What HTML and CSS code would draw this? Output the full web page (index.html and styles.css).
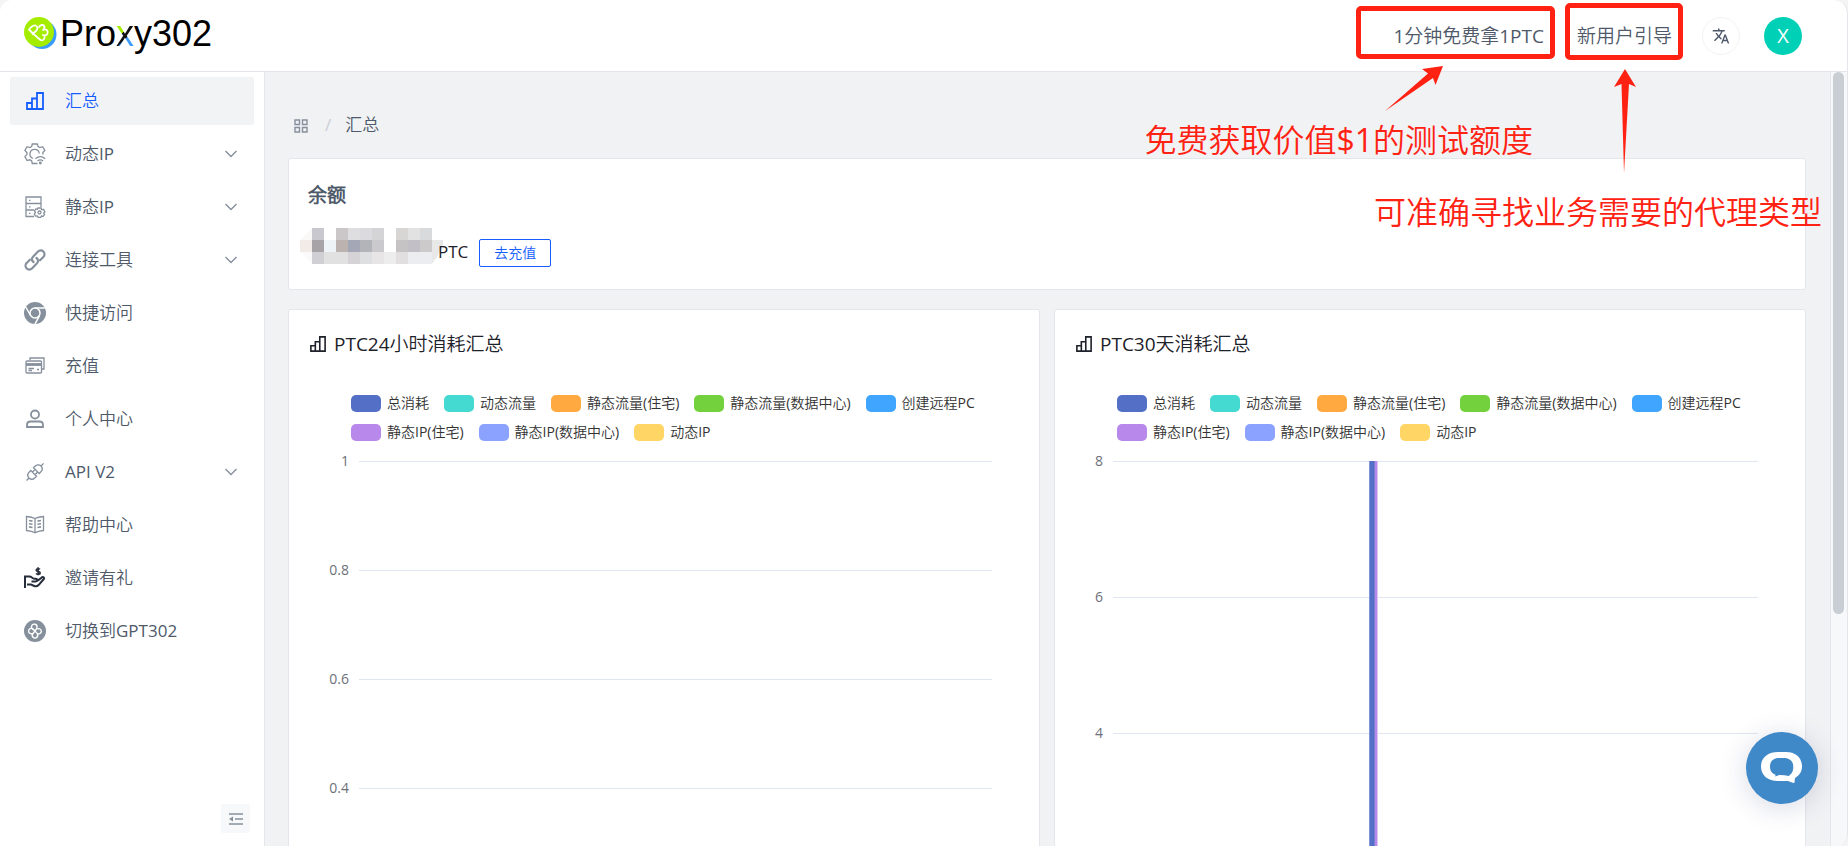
FILE: index.html
```html
<!DOCTYPE html>
<html lang="zh-CN">
<head>
<meta charset="utf-8">
<meta name="viewport" content="width=device-width, initial-scale=1">
<title>Proxy302</title>
<link rel="stylesheet" href="styles.css">
</head>
<body>
<svg class="sprite" aria-hidden="true">
  <symbol id="bars" viewBox="0 0 18 18"><path d="M1 11h5v6H1zM6 6.500h5V17H6zM11 1h6v16h-6z"/></symbol>
  <symbol id="chevron" viewBox="0 0 14 14"><path d="M1.500 4l5.500 5.500L12.500 4"/></symbol>
</svg>
<div class="app">
  <header class="topbar">
    <a class="brand" href="#">
      <svg class="brand-mark" viewBox="0 0 34 34" aria-hidden="true">
        <circle cx="18" cy="17.500" r="14.500" fill="#3b9cff"/>
        <circle cx="15" cy="15" r="15" fill="#a4ec00"/>
        <path d="M9.500 17L5 12.500C7.500 9.500 9.500 8 11.500 8.500c2.500 1 2.300 4 .5 5.500l-3.500 3M9.500 17l7 6c2 1 4-.5 4-2.500M15 10c1.500-3 5.500-2.500 5.500.5 0 1-.7 1.800-1.500 2.500 3-1.500 5.500.5 4.500 3.500-.7 2-3 2.500-4.500 1.500" fill="none" stroke="#fff" stroke-width="1.800" stroke-linecap="round" stroke-linejoin="round"/>
      </svg>
      <span class="brand-name">Pro<span class="brand-x">x</span>y302</span>
    </a>
    <nav class="top-actions">
      <a class="top-link" href="#">1分钟免费拿1PTC</a>
      <a class="top-link guide" href="#">新用户引导</a>
      <button class="lang" type="button" aria-label="切换语言">
        <svg viewBox="0 0 24 24" width="18" height="18"><path fill="#4e5969" d="M12.870 15.070l-2.540-2.510.03-.03c1.740-1.940 2.980-4.170 3.710-6.530H17V4h-7V2H8v2H1v1.990h11.170C11.500 7.920 10.440 9.750 9 11.350 8.070 10.320 7.300 9.190 6.690 8h-2c.73 1.630 1.730 3.170 2.980 4.560l-5.090 5.020L4 19l5-5 3.110 3.110.76-2.040zM18.500 10h-2L12 22h2l1.120-3h4.750L21 22h2l-4.500-12zm-2.620 7l1.620-4.330L19.120 17h-3.240z"/></svg>
      </button>
      <button class="avatar" type="button">X</button>
    </nav>
  </header>

  <div class="body">
    <aside class="sidebar">
      <nav class="menu">
        <a class="item active" href="#"><svg class="icon" viewBox="-2 -2 22 22"><use href="#bars" width="18" height="18"/></svg><span>汇总</span></a>
        <a class="item" href="#"><svg class="icon" viewBox="0 0 22 22"><path d="M13.500 20.500H8.300l-.7-2.700-1.800-1-2.700.8-2.200-4 2-2V9.500l-2-2 2.200-3.800 2.700.8 1.800-1L8.300 1h5l.8 2.500 1.800 1 2.700-.8 2.300 3.800-2 2v2"/><path d="M9 15.500a4.700 4.700 0 1 1 6.300-5"/><path d="M11.500 15.800c3-2.700 6.700-2.700 9.700 0M13.500 18c1.800-1.500 3.800-1.500 5.600 0"/><circle cx="16.300" cy="20" r=".8"/></svg><span>动态IP</span><svg class="arrow"><use href="#chevron"/></svg></a>
        <a class="item" href="#"><svg class="icon" viewBox="0 0 22 22"><path d="M10 20.500H2V1h15v10M2 7.500h15M2 14h8M5 4.300h1.500M5 10.800h1.500M5 17.300h1.500"/><circle cx="15.500" cy="16.500" r="1.500"/><path d="M14 12h3l.6 1.600 2-.2 1.300 2.400-1.200 1.200.8 1.500-1.300 1.800-1.700-.3-.8 1.300h-2.600l-.8-1.400-1.800.2-1.200-2.100 1.200-1.500-1-1.600 1.300-2 1.600.3z"/></svg><span>静态IP</span><svg class="arrow"><use href="#chevron"/></svg></a>
        <a class="item" href="#"><svg class="icon bold" viewBox="0 0 22 22"><path d="M9.500 13c-2-1.500-2-3.800-.5-5.300L14 2.600a3.700 3.700 0 0 1 5.400 5.300L16 11.300"/><path d="M12.500 9c2 1.500 2 3.800.5 5.300L8 19.400a3.700 3.700 0 0 1-5.400-5.300L6 10.700"/></svg><span>连接工具</span><svg class="arrow"><use href="#chevron"/></svg></a>
        <a class="item" href="#"><svg class="icon solid" viewBox="0 0 22 22"><circle cx="11" cy="11" r="11"/><path d="M10.800 6h10M6.600 13.500L1.700 5M15.500 13.600L11 22" stroke="#fff" stroke-width="1.500"/><circle cx="11" cy="11" r="5" stroke="#fff" stroke-width="1.500"/></svg><span>快捷访问</span></a>
        <a class="item" href="#"><svg class="icon" viewBox="0 0 22 22"><path d="M6 5V3h14v11h-2"/><rect x="2" y="6" width="15.500" height="12" rx="1"/><path d="M2 9.500h15.500" stroke-width="2.800"/><path d="M4.500 13.500H10M4.500 15.500H8M13 14.500h2" stroke-width="1.400"/></svg><span>充值</span></a>
        <a class="item" href="#"><svg class="icon thick" viewBox="0 0 22 22"><circle cx="11" cy="6.500" r="4"/><path d="M3 19v-2c0-2 1.500-3.500 3.500-3.500h9c2 0 3.500 1.500 3.500 3.500v2z"/></svg><span>个人中心</span></a>
        <a class="item" href="#"><svg class="icon" viewBox="0 0 22 22"><path d="M2.500 19.500l2.300-2.300M17.300 4.700l2.300-2.300M5 17c-2.200-2.300-1.200-4.500.3-6l1.500-1.500 5.700 5.700-1.500 1.500c-1.500 1.500-4 2.200-6 .3zM17 5c2.200 2.300 1.200 4.500-.3 6l-1.500 1.500-5.700-5.700L11 5.300C12.500 3.800 15 3 17 5zM8.500 11l2-2M11.200 13.500l2-2"/></svg><span>API V2</span><svg class="arrow"><use href="#chevron"/></svg></a>
        <a class="item" href="#"><svg class="icon" viewBox="0 0 22 22"><path d="M11 4.500C8.500 3.300 5.500 2.800 2.500 2.500V16.500c3 .3 6 .8 8.500 2.300 2.500-1.500 5.500-2 8.500-2.300V2.500c-3 .3-6 .8-8.500 2zM11 4.500v14"/><path d="M5 6.500l3.500.6M5 9.700l3.500.6M5 12.900l3.500.6M17 6.500l-3.500.6M17 9.700l-3.500.6M17 12.900l-3.500.6" stroke-width="1.600"/></svg><span>帮助中心</span></a>
        <a class="item" href="#"><svg class="icon dark" viewBox="0 0 22 22"><path d="M1 21V8.500M1 9.500h4.500c2 0 3.300 2.300 5 2.300h1.300c1.800 0 1.800 2.600 0 2.600H7.500M12.500 14c2-.3 4-2.600 5.500-3.800 1.300-.8 2.800.6 1.800 1.800l-5 5.800c-1.200 1.300-2.800 1.700-4 1.400L7 17.500H3"/><path d="M16 2.300c-1-1-3.800-.8-3.800 1 0 1.700 4 .9 4 2.700 0 1.700-3 1.700-4.200.5M14.100.3v8" stroke-width="1.600"/></svg><span>邀请有礼</span></a>
        <a class="item" href="#"><svg class="icon solid" viewBox="0 0 22 22"><circle cx="11" cy="11" r="11"/><path d="M9 9.500A2.800 2.800 0 1 1 13 7.500c0 1-.7 1.800-2 3.500M13.500 9a2.600 2.600 0 1 1 .5 4.800c-1.300-.4-2-1.500-3-2.800M13 13.500a2.700 2.700 0 1 1-4.500.8c.5-1 1.500-2 2.500-3.300M8.500 13.500A2.700 2.700 0 1 1 8 8.500c1.200.3 2 1.300 3 2.500" stroke="#fff" stroke-width="1.400"/></svg><span>切换到GPT302</span></a>
      </nav>
      <button class="collapse" type="button" aria-label="收起菜单">
        <svg viewBox="0 0 14 12" width="14" height="12"><path d="M0 1h14M6 6h8M0 11h14" stroke="#86909c" stroke-width="1.500"/><path d="M4 3.500v5L0 6z" fill="#86909c"/></svg>
      </button>
    </aside>

    <main class="content">
      <nav class="crumbs">
        <svg viewBox="0 0 14 14" width="14" height="14"><path d="M1 1h4.500v4.500H1zM8.500 1H13v4.500H8.500zM1 8.500h4.500V13H1zM8.500 8.500H13V13H8.500z" fill="none" stroke="#86909c" stroke-width="1.400"/></svg>
        <span class="slash">/</span>
        <span>汇总</span>
      </nav>

      <section class="card balance">
        <h2>余额</h2>
        <div class="balance-row">
          <svg class="mosaic" viewBox="0 0 144 36" width="144" height="36" shape-rendering="crispEdges" aria-hidden="true">
            <path fill="#faf8f6" d="M0 12L12 0v12z"/><path fill="#c9c8cf" d="M12 0h12v12H12z"/><path fill="#cbc7c8" d="M36 0h12v12H36z"/><path fill="#dedde0" d="M48 0h12v12H48z"/><path fill="#dbdbdf" d="M60 0h12v12H60z"/><path fill="#d4d3d6" d="M72 0h12v12H72z"/><path fill="#d8d6d5" d="M96 0h12v12H96z"/><path fill="#e3e2e3" d="M108 0h12v12h-12z"/><path fill="#d9dadc" d="M120 0h12v12h-12z"/>
            <path fill="#f2ebe8" d="M0 12h12v12H0z"/><path fill="#a7a3a7" d="M12 12h12v12H12z"/><path fill="#edf3f6" d="M24 12h12v12H24z"/><path fill="#bcb3b1" d="M36 12h12v12H36z"/><path fill="#a4a7b6" d="M48 12h12v12H48z"/><path fill="#b3b4b9" d="M60 12h12v12H60z"/><path fill="#cac9cd" d="M72 12h12v12H72z"/><path fill="#c6c3c5" d="M96 12h12v12H96z"/><path fill="#c2c0c6" d="M108 12h12v12h-12z"/><path fill="#cdcacb" d="M120 12h12v12h-12z"/><path fill="#e8e8e8" d="M132 12h11v6l-6 11-5 7z"/>
            <path fill="#fafafa" d="M0 24h12v12z"/><path fill="#cfcfd4" d="M12 24h12v12H12z"/><path fill="#e2e1e1" d="M24 24h24v12H24z"/><path fill="#d5d3d6" d="M48 24h12v12H48z"/><path fill="#dedfe1" d="M60 24h12v12H60z"/><path fill="#e7e5e5" d="M72 24h12v12H72z"/><path fill="#ededed" d="M84 24h12v12H84z"/><path fill="#e2dfe1" d="M96 24h12v12H96z"/><path fill="#ecedf0" d="M108 24h24v12h-24z"/>
          </svg>
          <span class="unit">PTC</span>
          <button class="recharge" type="button">去充值</button>
        </div>
      </section>

      <div class="charts">
        <section class="card chart">
          <h3><svg viewBox="0 0 18 18" width="16" height="16"><use href="#bars"/></svg>PTC24小时消耗汇总</h3>
          <ul class="legend">
            <li class="c1">总消耗</li><li class="c2">动态流量</li><li class="c3">静态流量(住宅)</li><li class="c4">静态流量(数据中心)</li><li class="c5">创建远程PC</li><li class="c6">静态IP(住宅)</li><li class="c7">静态IP(数据中心)</li><li class="c8">动态IP</li>
          </ul>
          <div class="plot day">
            <div class="tick"><span>1</span></div>
            <div class="tick"><span>0.8</span></div>
            <div class="tick"><span>0.6</span></div>
            <div class="tick"><span>0.4</span></div>
          </div>
        </section>
        <section class="card chart">
          <h3><svg viewBox="0 0 18 18" width="16" height="16"><use href="#bars"/></svg>PTC30天消耗汇总</h3>
          <ul class="legend">
            <li class="c1">总消耗</li><li class="c2">动态流量</li><li class="c3">静态流量(住宅)</li><li class="c4">静态流量(数据中心)</li><li class="c5">创建远程PC</li><li class="c6">静态IP(住宅)</li><li class="c7">静态IP(数据中心)</li><li class="c8">动态IP</li>
          </ul>
          <div class="plot month">
            <div class="tick"><span>8</span></div>
            <div class="tick"><span>6</span></div>
            <div class="tick"><span>4</span></div>
            <div class="series"></div>
          </div>
        </section>
      </div>
    </main>
    <div class="scroll"><div class="thumb"></div></div>
  </div>

  <button class="chat" type="button" aria-label="在线客服">
    <svg viewBox="0 0 42 32" width="42" height="32"><path fill="#fff" fill-rule="evenodd" d="M17 0h8c10 0 16 6 16 14.500 0 5-2.500 9-7 11.500l-.6 5c-2-.2-4.500-1.200-6.500-2H17C7 29 0 23.500 0 14.500S7 0 17 0zM18 6c-6 0-9 3.500-9 8.500 0 4.500 2 7 5.500 8.300l-.2 1.700 4-1.500 5 .3 4.500.7 1.500-1.500c2-1.500 3-4 3-8 0-5-3.500-8.500-9-8.500z"/></svg>
  </button>

  <div class="notes">
    <div class="frame frame-free"></div>
    <div class="frame frame-guide"></div>
    <svg class="pointer pointer-free" viewBox="0 0 58 45" width="58" height="45"><path d="M0 45L43 7.500 37 3 58 0 50.500 19 48 12z"/></svg>
    <svg class="pointer pointer-guide" viewBox="0 0 22 104" width="22" height="104"><path d="M10 104L7.500 15 0 18 11 0l11 18-7-3z"/></svg>
    <p class="note note-free">免费获取价值$1的测试额度</p>
    <p class="note note-guide">可准确寻找业务需要的代理类型</p>
  </div>
</div>
</body>
</html>
```

FILE: styles.css
```css
* { box-sizing: border-box; }

body {
  margin: 0;
  background: #f4f4f4;
  color: #4e5969;
  font: 400 17px/24px "Open Sans", "Noto Sans CJK SC DemiLight", "Noto Sans CJK SC", sans-serif;
}

a { color: inherit; text-decoration: none; }
button { font: inherit; padding: 0; cursor: pointer; }
.sprite { display: none; }

.app {
  position: relative;
  display: flex;
  flex-direction: column;
  height: 100vh;
  overflow: hidden;
  background: #fff;
  border-right: 1px solid #e5e6eb;
  border-radius: 12px 14px 12px 0;
}

/* Top bar */
.topbar {
  display: flex;
  flex: none;
  align-items: center;
  justify-content: space-between;
  height: 72px;
  padding: 0 45px 0 24px;
  border-bottom: 1px solid #e5e6eb;
}
.brand { display: flex; align-items: center; gap: 2px; padding-bottom: 4px; }
.brand-mark { width: 34px; height: 34px; }
.brand-name {
  color: #000;
  font: 400 36px/40px "Liberation Sans", Arial, sans-serif;
}
.brand-x {
  background: linear-gradient(135deg, #a4ec00 44%, #111 45%, #111 59%, #3b9cff 60%);
  background-clip: text;
  -webkit-background-clip: text;
  color: transparent;
}
.top-actions { display: flex; align-items: center; }
.top-link { font-size: 19px; }
.guide { margin: 0 30px 0 33px; }
.lang,
.avatar {
  display: flex;
  align-items: center;
  justify-content: center;
  width: 38px;
  height: 38px;
  border-radius: 50%;
}
.lang { margin-right: 24px; background: #fff; border: 1px solid #f2f3f5; }
.avatar { background: #00d0b6; border: 0; color: #fff; font-size: 20px; }

/* Side menu */
.body { display: flex; flex: 1; min-height: 0; }
.sidebar {
  display: flex;
  flex: none;
  flex-direction: column;
  justify-content: space-between;
  width: 265px;
  padding: 5px 10px 13px;
  border-right: 1px solid #e5e6eb;
}
.menu { display: flex; flex-direction: column; gap: 5px; }
.item {
  display: flex;
  align-items: center;
  height: 48px;
  padding: 0 16px 0 14px;
  border-radius: 2px;
}
.item.active { background: #f2f3f5; color: #165dff; }
.item span { flex: 1; margin-left: 19px; }
.icon {
  width: 22px;
  height: 22px;
  fill: none;
  stroke: #86909c;
  stroke-width: 1.3;
}
.active .icon { stroke: #165dff; stroke-width: 1.8; }
.icon.thick { stroke-width: 1.8; }
.icon.bold { stroke-width: 2.2; stroke-linecap: round; }
.icon.dark { stroke: #272e3b; stroke-width: 2; }
.icon.solid { stroke: none; }
.icon.solid circle { fill: #86909c; }
.icon.solid path { fill: none; }
.arrow { width: 14px; height: 14px; fill: none; stroke: #86909c; stroke-width: 1.4; }
.collapse {
  display: flex;
  align-items: center;
  justify-content: center;
  align-self: flex-end;
  width: 29px;
  height: 29px;
  margin-right: 4px;
  background: #f7f8fa;
  border: 0;
  border-radius: 2px;
}

/* Content */
.content {
  flex: 1;
  min-width: 0;
  overflow: hidden;
  padding: 0 24px 0 23px;
  background: #f1f2f4;
  border-right: 1px solid #e5e6eb;
}
.crumbs { display: flex; align-items: center; height: 86px; padding: 20px 6px 0; }
.crumbs svg { margin-top: 2px; }
.slash { margin: 0 14px 0 17px; color: #c9cdd4; }
.card { background: #fff; border: 1px solid #e5e6eb; border-radius: 3px; }

.balance { height: 132px; padding: 23px 11px; }
.balance h2 { margin: 0 8px; font-size: 19px; font-weight: 700; line-height: 26px; }
.balance-row { display: flex; align-items: flex-start; padding-top: 20px; }
.unit { margin: 12px 11px 0 -6px; color: #1d2129; }
.recharge {
  width: 72px;
  height: 28px;
  margin-top: 11px;
  background: #fff;
  border: 1px solid #165dff;
  border-radius: 2px;
  color: #165dff;
  font-size: 14px;
  line-height: 24px;
}

.charts { display: grid; grid-template-columns: 1fr 1fr; gap: 14px; margin-top: 19px; }
.chart { height: 640px; padding: 20px 21px; }
.chart h3 {
  display: flex;
  align-items: center;
  gap: 8px;
  margin: 0;
  color: #1d2129;
  font-size: 19px;
  font-weight: 400;
  line-height: 28px;
}
.chart h3 svg { fill: none; stroke: #1d2129; stroke-width: 1.8; }
.legend {
  display: flex;
  flex-wrap: wrap;
  gap: 5px 15px;
  margin: 33px 30px 0 41px;
  padding: 0;
  list-style: none;
  color: #333;
  font-size: 14px;
}
.legend li { display: flex; align-items: center; gap: 6px; white-space: nowrap; }
.legend li::before { width: 30px; height: 17px; border-radius: 5px; content: ""; }
.c1::before { background: #5470c6; }
.c2::before { background: #45dad1; }
.c3::before { background: #ffa940; }
.c4::before { background: #73d13d; }
.c5::before { background: #40a5ff; }
.c6::before { background: #b888eb; }
.c7::before { background: #8ca2ff; }
.c8::before { background: #ffd666; }

.plot { position: relative; margin: 5px 26px 0 0; color: #6e7079; font-size: 14px; }
.tick { display: flex; align-items: center; gap: 10px; height: 24px; }
.tick::after { flex: 1; height: 1px; background: #e0e6f1; content: ""; }
.tick span { width: 39px; text-align: right; }
.day .tick { margin-bottom: 85px; }
.month .tick { margin-bottom: 112px; }
.month .tick span { width: 27px; }
.series {
  position: absolute;
  top: 12px;
  bottom: -200px;
  left: 43%;
  width: 9px;
  background: linear-gradient(90deg, #8296d5 1px, #5470c6 1px 5px, #7780cf 5px 6px, #b888eb 6px 8px, #dcc4f5 8px);
}

/* Scrollbar */
.scroll { flex: none; width: 16px; padding: 0 3px 0 2px; background: #f7f8fa; }
.thumb { height: 70%; background: #c9cdd4; border-radius: 6px; }

/* Chat launcher */
.chat {
  position: absolute;
  right: 29px;
  bottom: 42px;
  display: flex;
  align-items: center;
  justify-content: center;
  width: 72px;
  height: 72px;
  background: #3f89c9;
  border: 0;
  border-radius: 50%;
  box-shadow: 0 4px 28px rgba(40, 50, 110, 0.18);
}

/* Callouts above the page */
.notes { position: absolute; top: 0; right: 0; pointer-events: none; }
.frame { position: absolute; border: 5px solid #ff2213; border-radius: 5px; }
.frame-free { top: 6px; right: 292px; width: 199px; height: 53px; }
.frame-guide { top: 3px; right: 164px; width: 118px; height: 57px; }
.pointer { position: absolute; fill: #ff2213; }
.pointer-free { top: 66px; right: 404px; }
.pointer-guide { top: 69px; right: 211px; }
.note {
  position: absolute;
  margin: 0;
  color: #ff2213;
  font-size: 32px;
  line-height: 40px;
  white-space: nowrap;
}
.note-free { top: 120px; right: 314px; }
.note-guide { top: 192px; right: 25px; }
```
